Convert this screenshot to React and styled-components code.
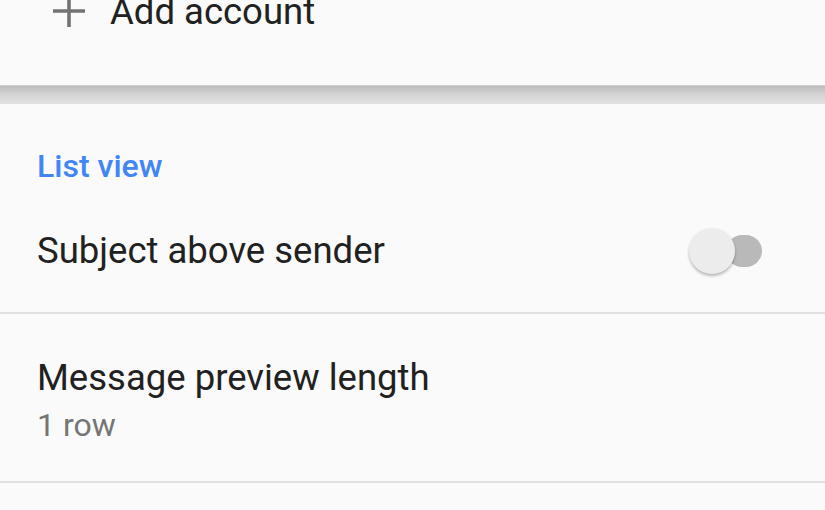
import styled, { createGlobalStyle } from "styled-components"

const GlobalStyle = createGlobalStyle`
	html, body {
		margin: 0;
		padding: 0;
		background: #fafafa;
		font-family: Roboto, "Noto Sans", sans-serif;
		overflow: hidden;
	}
`

const PlusIcon = () => (
	<svg width="34" height="34" viewBox="0 0 34 34">
		<path d="M17 1v32M1 17h32" stroke="#737373" strokeWidth="3.6" fill="none" />
	</svg>
)

const App = () => {
	return (
		<Page>
			<GlobalStyle />
			<TopCard>
				<AddRow>
					<PlusIcon />
					<AddLabel>Add account</AddLabel>
				</AddRow>
			</TopCard>
			<Shadow />
			<Card>
				<SectionTitle>List view</SectionTitle>
				<ToggleRow>
					<Title>Subject above sender</Title>
					<Switch>
						<Track />
						<Thumb />
					</Switch>
				</ToggleRow>
				<Divider />
				<TextRow>
					<Title>Message preview length</Title>
					<Summary>1 row</Summary>
				</TextRow>
				<Divider />
			</Card>
		</Page>
	)
}

const Page = styled.div`
	display: flex;
	flex-direction: column;
	width: 825px;
	height: 510px;
	overflow: hidden;
	background: #fafafa;
`

const TopCard = styled.div`
	display: flex;
	flex-direction: column;
	height: 85px;
	border-bottom: 1px solid #cfcfcf;
	background: #fafafa;
`

const AddRow = styled.div`
	display: flex;
	align-items: center;
	gap: 24px;
	margin-top: -19px;
	padding-left: 52px;
	height: 60px;
`

const AddLabel = styled.span`
	font-size: 36.5px;
	color: #212121;
`

const Shadow = styled.div`
	height: 18px;
	background: linear-gradient(to bottom, #bcbcbc 0%, #d4d4d4 45%, #e2e2e2 100%);
`

const Card = styled.div`
	display: flex;
	flex-direction: column;
	background: #fafafa;
`

const SectionTitle = styled.div`
	margin: 42px 0 0 37px;
	font-size: 32px;
	line-height: 40px;
	font-weight: 500;
	color: #4285f4;
`

const ToggleRow = styled.div`
	display: flex;
	align-items: center;
	justify-content: space-between;
	height: 126px;
	padding: 4px 63px 0 37px;
	box-sizing: border-box;
`

const Title = styled.div`
	font-size: 36.5px;
	line-height: 44px;
	color: #212121;
`

const Switch = styled.div`
	position: relative;
	width: 73px;
	height: 46px;
`

const Track = styled.div`
	position: absolute;
	left: 37px;
	top: 7px;
	width: 36px;
	height: 32px;
	border-radius: 16px;
	background: #b9b9b9;
`

const Thumb = styled.div`
	position: absolute;
	left: 0;
	top: 0;
	width: 46px;
	height: 46px;
	border-radius: 50%;
	background: #ececec;
	box-shadow: 0 2px 3px rgba(0, 0, 0, 0.28);
`

const Divider = styled.div`
	height: 2px;
	background: #e0e0e0;
`

const TextRow = styled.div`
	display: flex;
	flex-direction: column;
	height: 167px;
	padding: 42px 0 0 37px;
	box-sizing: border-box;
`

const Summary = styled.div`
	margin-top: 5px;
	font-size: 32px;
	line-height: 40px;
	color: #757575;
`

export default App
